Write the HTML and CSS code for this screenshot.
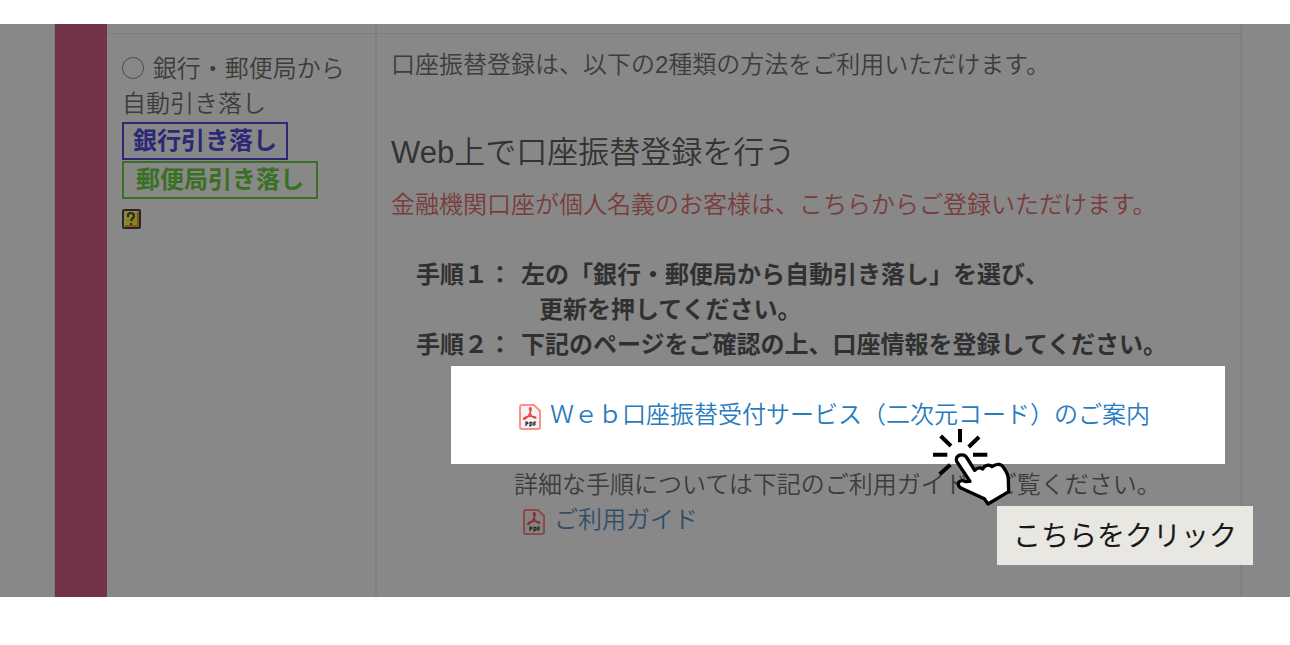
FILE: index.html
```html
<!DOCTYPE html>
<html lang="ja">
<head>
    <meta charset="UTF-8">
    <meta name="viewport" content="width=device-width, initial-scale=1.0">
    <title>口座振替登録</title>
    <link rel="stylesheet" href="styles.css">
</head>
<body>

    <main class="screen">
        <div class="previous-row">
            <div class="side-bar"></div>
            <div class="cell"></div>
            <div class="cell"></div>
        </div>

        <div class="payment-row">
            <div class="side-bar"></div>

            <!-- Payment method -->
            <div class="cell method">
                <input type="radio" id="bank" name="payment" class="radio">
                <label for="bank">銀行・郵便局から自動引き落し</label>
                <div class="badge bank">銀行引き落し</div>
                <div class="badge post">郵便局引き落し</div>
                <a href="#help" class="help" aria-label="ヘルプ">
                    <svg width="19" height="20" viewBox="0 0 19 20">
                        <rect x="1" y="1" width="17" height="18" rx="1" fill="#8b8424" stroke="#272727" stroke-width="2"/>
                        <path d="M3 17V3h12" fill="none" stroke="#8d8d6d" stroke-width="1"/>
                        <path d="M3 17h13V3" fill="none" stroke="#805516" stroke-width="2"/>
                        <path d="M6 8V6q0-2 3-2t3 3q0 1-1 2t-2 3M9 14v2" fill="none" stroke="#272720" stroke-width="2"/>
                    </svg>
                </a>
            </div>

            <!-- Registration guide -->
            <div class="cell guide">
                <p>口座振替登録は、以下の2種類の方法をご利用いただけます。</p>
                <h2>Web上で口座振替登録を行う</h2>
                <p class="notice">金融機関口座が個人名義のお客様は、こちらからご登録いただけます。</p>

                <div class="steps">
                    <span>手順１：</span>
                    <p>左の「銀行・郵便局から自動引き落し」を選び、<br><span class="next-line">更新を押してください。</span></p>
                    <span>手順２：</span>
                    <p>下記のページをご確認の上、口座情報を登録してください。</p>
                </div>

                <div class="highlight">
                    <a href="#service" class="pdf-link">
                        <svg class="pdf-icon" viewBox="0 0 22 26">
                            <path d="M3 1h12l6 6v16q0 2-2 2H3q-2 0-2-2V3q0-2 2-2z" fill="#f5f3f3" stroke="#ff8f8b" stroke-width="2"/>
                            <path d="M11 6c-2-3 2-3 1 0-1 4-3 7-6 9-2 1-2-1 1-2 3-1 6-1 9 0 2 1 0 2-2 0-2-1-3-4-3-7z" fill="none" stroke="#f0413e" stroke-width="1.400"/>
                            <path d="M7 22v-4h1q2 1 0 2H7M11 18v4q3-1 2-3-1-1-2-1M15 22v-4h2M15 20h2" fill="none" stroke="#222" stroke-width="1.200"/>
                        </svg>
                        <span>Ｗｅｂ口座振替受付サービス（二次元コード）のご案内</span>
                    </a>

                    <svg class="hand" viewBox="0 0 300 285">
                        <path d="M120 27v40M62 48l31 30M177 51l-31 30M39 104h43M159 104h43M91 134l-32 29" fill="none" stroke="#000" stroke-width="12"/>
                        <path d="M110 124c-7-18 21-28 31-10l23 37c7-8 17-9 24-4 5-11 20-15 28-7 14-10 29-10 36 5 8 11 13 21 13 34l1 36-62 37-11-16-72-33c-17-15 3-26 15-18l14-1z" fill="#fff" stroke="#000" stroke-width="10" stroke-linejoin="round"/>
                    </svg>
                    <div class="callout">こちらをクリック</div>
                </div>

                <div class="details">
                    <p>詳細な手順については下記のご利用ガイドをご覧ください。</p>
                    <a href="#guide" class="pdf-link dimmed">
                        <svg class="pdf-icon" viewBox="0 0 22 26">
                            <path d="M3 1h12l6 6v16q0 2-2 2H3q-2 0-2-2V3q0-2 2-2z" fill="#858383" stroke="#8d4946" stroke-width="2"/>
                            <path d="M11 6c-2-3 2-3 1 0-1 4-3 7-6 9-2 1-2-1 1-2 3-1 6-1 9 0 2 1 0 2-2 0-2-1-3-4-3-7z" fill="none" stroke="#88302e" stroke-width="1.400"/>
                            <path d="M7 22v-4h1q2 1 0 2H7M11 18v4q3-1 2-3-1-1-2-1M15 22v-4h2M15 20h2" fill="none" stroke="#222" stroke-width="1.200"/>
                        </svg>
                        <span>ご利用ガイド</span>
                    </a>
                </div>
            </div>
        </div>
    </main>

</body>
</html>
```

FILE: styles.css
```css
* {
    box-sizing: border-box;
    margin: 0;
    padding: 0;
}
body {
    padding: 24px 0 48px;
    background-color: #fff;
    color: #3c3c3c;
    font-family: "Liberation Sans", "Noto Sans CJK JP", sans-serif;
    font-size: 24px;
    font-weight: 350;
    line-height: 35px;
}
.screen {
    padding: 0 48px 0 54px;
    background-color: #888;
}
.previous-row,
.payment-row {
    display: grid;
    grid-template-columns: 53px 270px 1fr;
}
.previous-row {
    height: 9px;
}
.side-bar {
    border-left: 1px solid #7c7c7c;
    background-color: #723346;
}
.cell {
    border-right: 2px solid #808080;
}
.payment-row .cell {
    border-top: 1px solid #7e7e7e;
}
.method {
    padding: 17px 14px 0 15px;
}
.radio {
    appearance: none;
    width: 22px;
    height: 22px;
    margin-right: 2px;
    border: 1px solid #4c4c4c;
    border-radius: 50%;
    vertical-align: -2px;
}
.badge {
    width: fit-content;
    height: 38px;
    margin-top: 1px;
    padding: 0 9px;
    border: 2px solid #2b2877;
    color: #2b2877;
    font-weight: 700;
    line-height: 33px;
}
.post {
    padding: 0 12px;
    border-color: #397022;
    color: #397022;
}
.help {
    display: block;
    width: 19px;
    height: 20px;
    margin-top: 10px;
}
.help svg {
    display: block;
}
.guide {
    padding: 13px 15px 60px 14px;
}
h2 {
    margin: 53px 0 17px;
    color: #333;
    font-size: 31px;
    font-weight: 350;
}
.notice {
    color: #793c3c;
}
.steps {
    display: grid;
    grid-template-columns: 105px 1fr;
    margin: 35px 0 4px 25px;
    color: #303030;
    font-weight: 700;
}
.next-line {
    padding-left: 18px;
}
.highlight {
    position: relative;
    margin-left: 60px;
    padding: 31px 0 32px 68px;
    background-color: #fff;
}
.pdf-link {
    display: flex;
    align-items: center;
    gap: 9px;
    color: #287bbd;
    text-decoration: none;
}
.pdf-icon {
    width: 22px;
    height: 26px;
    margin-top: 4px;
}
.hand {
    position: absolute;
    top: 54px;
    right: 205px;
    width: 100px;
    height: 95px;
    z-index: 1;
}
.callout {
    position: absolute;
    top: 140px;
    right: -28px;
    padding: 13px 16px 11px;
    background-color: #e8e7e2;
    color: #191919;
    font-size: 28px;
    font-weight: 400;
    white-space: nowrap;
}
.details {
    margin: 3px 0 0 123px;
}
.dimmed {
    padding-left: 9px;
    color: #304e6c;
}
```
